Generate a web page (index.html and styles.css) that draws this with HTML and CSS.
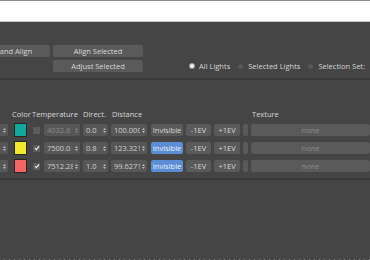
FILE: index.html
```html
<!DOCTYPE html>
<html lang="en">
<head>
    <meta charset="UTF-8">
    <title>Light Lister</title>
    <link rel="stylesheet" href="styles.css">
</head>
<body>
    <div class="titlebar"></div>

    <div class="rollout tools">
        <div class="btn-grid">
            <button class="btn">Expand and Align</button>
            <button class="btn">Align Selected</button>
            <span></span>
            <button class="btn">Adjust Selected</button>
        </div>
        <div class="radios">
            <label class="radio on"><i></i>All Lights</label>
            <label class="radio"><i></i>Selected Lights</label>
            <label class="radio"><i></i>Selection Set:</label>
        </div>
    </div>

    <div class="rollout lights">
        <div class="grid">
            <!-- header -->
            <span></span>
            <span class="hd color">Color</span>
            <span class="hd temp">Temperature</span>
            <span class="hd">Direct.</span>
            <span class="hd dist">Distance</span>
            <span></span><span></span><span></span><span></span>
            <span class="hd tex">Texture</span>

            <!-- row 1 -->
            <div class="spin stub"><span class="val"></span><svg class="arr" width="3" height="7" viewBox="0 0 3 7"><path d="M0 3L1.5 1L3 3ZM0 4L1.5 6L3 4Z" fill="#bbb"/></svg></div>
            <div class="swatch" style="background:#0ea99c"></div>
            <div class="check"></div>
            <div class="spin dim"><span class="val">4032.8</span><svg class="arr" width="3" height="7" viewBox="0 0 3 7"><path d="M0 3L1.5 1L3 3ZM0 4L1.5 6L3 4Z" fill="#888"/></svg></div>
            <div class="spin short"><span class="val">0.0</span><svg class="arr" width="3" height="7" viewBox="0 0 3 7"><path d="M0 3L1.5 1L3 3ZM0 4L1.5 6L3 4Z" fill="#bbb"/></svg></div>
            <div class="spin"><span class="val">100.0000</span><svg class="arr" width="3" height="7" viewBox="0 0 3 7"><path d="M0 3L1.5 1L3 3ZM0 4L1.5 6L3 4Z" fill="#bbb"/></svg></div>
            <button class="btn cell">Invisible</button>
            <button class="btn cell">-1EV</button>
            <button class="btn cell">+1EV</button>
            <button class="btn cell"></button>
            <button class="btn cell none">none</button>

            <!-- row 2 -->
            <div class="spin stub"><span class="val"></span><svg class="arr" width="3" height="7" viewBox="0 0 3 7"><path d="M0 3L1.5 1L3 3ZM0 4L1.5 6L3 4Z" fill="#bbb"/></svg></div>
            <div class="swatch" style="background:#f3e82c"></div>
            <div class="check"><svg width="6" height="6" viewBox="0 0 6 6"><path d="M1 3.2L2.4 4.6L5 1.4" stroke="#eee" stroke-width="1.2" fill="none"/></svg></div>
            <div class="spin"><span class="val">7500.0</span><svg class="arr" width="3" height="7" viewBox="0 0 3 7"><path d="M0 3L1.5 1L3 3ZM0 4L1.5 6L3 4Z" fill="#bbb"/></svg></div>
            <div class="spin short"><span class="val">0.8</span><svg class="arr" width="3" height="7" viewBox="0 0 3 7"><path d="M0 3L1.5 1L3 3ZM0 4L1.5 6L3 4Z" fill="#bbb"/></svg></div>
            <div class="spin"><span class="val">123.3214</span><svg class="arr" width="3" height="7" viewBox="0 0 3 7"><path d="M0 3L1.5 1L3 3ZM0 4L1.5 6L3 4Z" fill="#bbb"/></svg></div>
            <button class="btn cell active">Invisible</button>
            <button class="btn cell">-1EV</button>
            <button class="btn cell">+1EV</button>
            <button class="btn cell"></button>
            <button class="btn cell none">none</button>

            <!-- row 3 -->
            <div class="spin stub"><span class="val"></span><svg class="arr" width="3" height="7" viewBox="0 0 3 7"><path d="M0 3L1.5 1L3 3ZM0 4L1.5 6L3 4Z" fill="#bbb"/></svg></div>
            <div class="swatch" style="background:#f56565"></div>
            <div class="check"><svg width="6" height="6" viewBox="0 0 6 6"><path d="M1 3.2L2.4 4.6L5 1.4" stroke="#eee" stroke-width="1.2" fill="none"/></svg></div>
            <div class="spin"><span class="val">7512.2800</span><svg class="arr" width="3" height="7" viewBox="0 0 3 7"><path d="M0 3L1.5 1L3 3ZM0 4L1.5 6L3 4Z" fill="#bbb"/></svg></div>
            <div class="spin short"><span class="val">1.0</span><svg class="arr" width="3" height="7" viewBox="0 0 3 7"><path d="M0 3L1.5 1L3 3ZM0 4L1.5 6L3 4Z" fill="#bbb"/></svg></div>
            <div class="spin"><span class="val">99.6271</span><svg class="arr" width="3" height="7" viewBox="0 0 3 7"><path d="M0 3L1.5 1L3 3ZM0 4L1.5 6L3 4Z" fill="#bbb"/></svg></div>
            <button class="btn cell active">Invisible</button>
            <button class="btn cell">-1EV</button>
            <button class="btn cell">+1EV</button>
            <button class="btn cell"></button>
            <button class="btn cell none">none</button>
        </div>
    </div>

    <div class="rest"></div>
    <div class="dots"></div>
</body>
</html>
```

FILE: styles.css
```css
body {
    margin: 0;
    height: 260px;
    display: flex;
    flex-direction: column;
    overflow: hidden;
    background: #454545;
    font-family: 'Open Sans', sans-serif;
    font-size: 7.5px;
    color: #d6d6d6;
}

.titlebar {
    height: 20px;
    flex: none;
    background: #ffffff;
    border-top: 1px solid #8c8c8c;
    border-bottom: 1px solid #c4c4c4;
}

.rollout {
    flex: none;
    border-bottom: 2px solid #393939;
}

/* top toolbar */
.tools {
    display: flex;
    align-items: flex-start;
    height: 58px;
    padding-top: 23px;
    box-sizing: border-box;
    overflow: hidden;
}

.btn {
    height: 12px;
    padding: 0;
    border: none;
    border-radius: 2px;
    background: #5a5a5a;
    color: #d8d8d8;
    font: inherit;
    white-space: nowrap;
    overflow: hidden;
}

.btn-grid {
    display: grid;
    grid-template-columns: 96px 90px;
    gap: 3px;
    margin-left: -46px;
}

.radios {
    display: flex;
    align-items: center;
    height: 12px;
    margin-top: 15px;
    margin-left: 46px;
}

.radio {
    display: flex;
    align-items: center;
    gap: 5px;
    margin-right: 8px;
    white-space: nowrap;
}

.radio i {
    width: 5px;
    height: 5px;
    border-radius: 50%;
    background: #575757;
}

.radio.on i {
    width: 4px;
    height: 4px;
    margin-left: 1px;
    background: #f0f0f0;
    box-shadow: 0 0 0 1px #9c9c9c;
}

/* light list */
.lights {
    padding: 29px 0 5px;
    overflow: hidden;
}

.grid {
    display: grid;
    grid-template-columns: 26px 19px 11px 39px 28px 40px 35px 28px 29px 8px 1fr;
    grid-template-rows: 10px;
    grid-auto-rows: 14px;
    row-gap: 4px;
    align-items: center;
    margin-left: -12px;
}

.hd {
    white-space: nowrap;
    color: #d8d8d8;
}

.hd.color {
    margin-left: -2px;
}

.hd.temp {
    grid-column: span 2;
    margin-left: -1px;
}

.hd.dist {
    margin-left: 1px;
}

.hd.tex {
    margin-left: 1px;
}

.spin {
    display: flex;
    align-items: center;
    width: 36px;
    height: 12px;
    padding: 0 2px 0 3px;
    box-sizing: border-box;
    background: #575757;
    border-radius: 2px;
    color: #cfcfcf;
}

.spin .val {
    flex: 1;
    overflow: hidden;
    white-space: nowrap;
}

.spin .arr {
    flex: none;
    margin-left: 2px;
}

.spin.dim {
    color: #8a8a8a;
}

.spin.short {
    width: 25px;
}

.spin.stub {
    width: 20px;
}

.swatch {
    width: 13px;
    height: 14px;
    box-sizing: border-box;
    border: 1px solid #262626;
}

.check {
    display: flex;
    align-items: center;
    justify-content: center;
    width: 7px;
    height: 7px;
    background: #5c5c5c;
}

.cell {
    width: calc(100% - 3px);
}

.cell.active {
    background: #5b8dd4;
    color: #eef3fb;
}

.cell.none {
    width: 100%;
    color: #8c8c8c;
}

.rest {
    flex: 1;
}

.dots {
    flex: none;
    height: 1px;
    background: repeating-linear-gradient(to right, #454545 0 4px, #7a7a7a 4px 5px);
}
```
